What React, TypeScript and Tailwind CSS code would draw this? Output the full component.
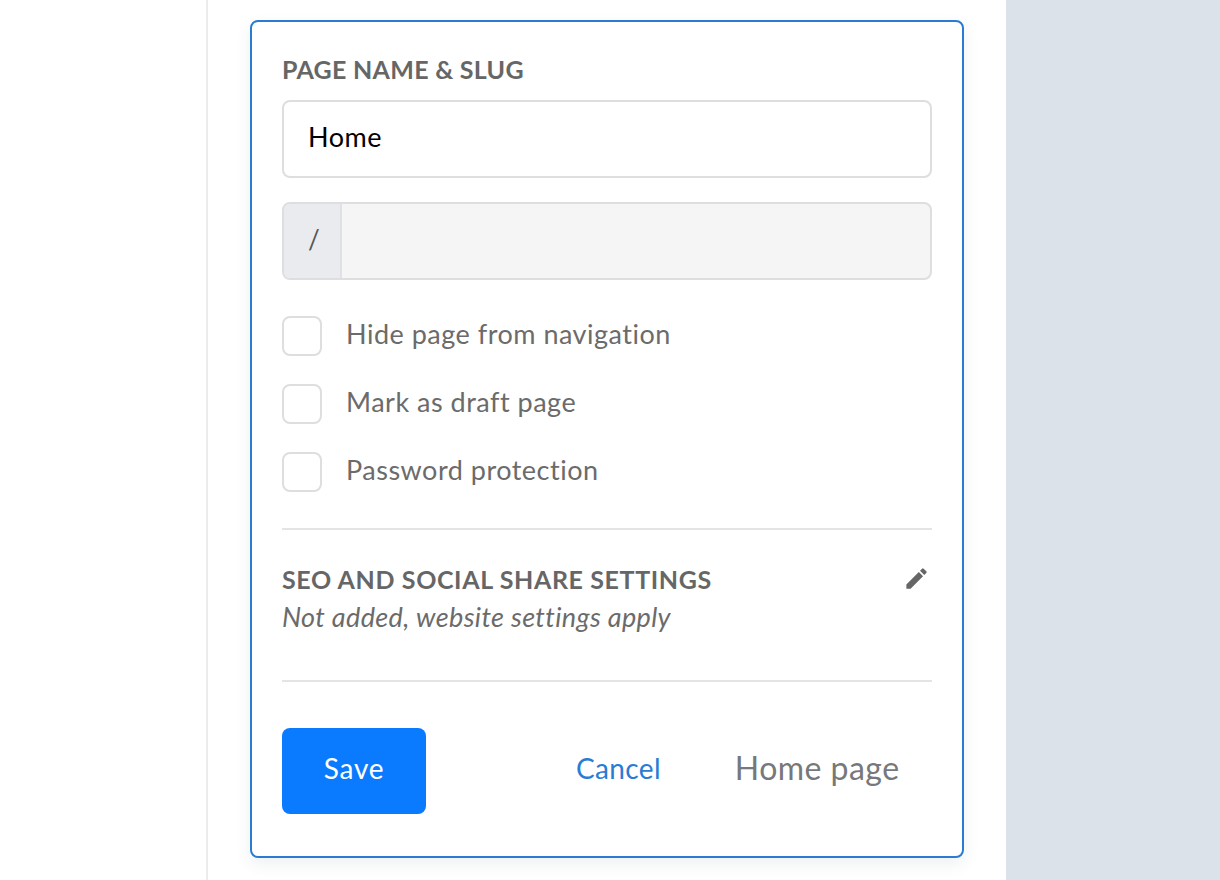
import { MdEdit } from 'react-icons/md';

const options = ['Hide page from navigation', 'Mark as draft page', 'Password protection'];

export default function App() {
  return (
    <div className="flex h-screen overflow-hidden bg-white font-['Lato','Liberation_Sans',sans-serif]">
      <div className="w-[206px] shrink-0" />

      <div className="w-[800px] shrink-0 border-l-2 border-[#ececec] bg-white pt-5 pl-[42px]">
        <div className="flex h-[838px] w-[714px] flex-col rounded-lg border-2 border-[#2a7cd3] bg-white px-[30px] pt-[34px] shadow-[0_6px_16px_rgba(40,60,90,0.08)]">
          <h2 className="text-[25px] leading-[26px] font-bold tracking-[0.28px] text-[#666666]">PAGE NAME &amp; SLUG</h2>

          <div className="mt-[18px] flex h-[78px] items-center rounded-lg border-2 border-[#dddedf] bg-white pb-1 pl-6 text-[27px] tracking-[0.5px] text-black">
            Home
          </div>

          <div className="mt-6 flex h-[78px] overflow-hidden rounded-lg border-2 border-[#dddedf] bg-[#f5f5f6]">
            <div className="flex w-[58px] items-center border-r-2 border-[#dfe1e4] bg-[#e9ebee] pb-1 pl-6 text-[26px] text-[#555555]">/</div>
          </div>

          <div className="mt-9 flex flex-col gap-7">
            {options.map(label => (
              <label key={label} className="flex h-10 items-center gap-6 text-[27px] tracking-[0.5px] text-[#6b6b6b]">
                <span className="h-10 w-10 shrink-0 rounded-lg border-2 border-[#dddedf] bg-white" />
                <span className="pb-[3px]">{label}</span>
              </label>
            ))}
          </div>

          <div className="mt-9 border-t-2 border-[#e4e4e4]" />

          <div className="mt-[35px] flex items-center justify-between">
            <h2 className="text-[25px] leading-[26px] font-bold tracking-[0.62px] text-[#666666]">SEO AND SOCIAL SHARE SETTINGS</h2>
            <MdEdit size={27} className="mr-[2px] text-[#666666]" />
          </div>
          <p className="mt-[12px] text-[27px] leading-[26px] tracking-[0.36px] text-[#6b6b6b] italic">Not added, website settings apply</p>

          <div className="mt-[50px] border-t-2 border-[#e4e4e4]" />

          <div className="mt-[46px] flex items-center">
            <button className="h-[86px] w-[144px] rounded-lg bg-[#0a7aff] pb-[7px] text-[28px] tracking-[0.7px] text-white">Save</button>
            <a className="mb-[7px] ml-[150px] text-[28px] tracking-[0.35px] text-[#2a7cd3]">Cancel</a>
            <span className="mb-[7px] ml-[74px] text-[32px] tracking-[0.45px] text-[#77787b]">Home page</span>
          </div>
        </div>
      </div>

      <div className="flex-1 bg-[#dbe2ea]" />
    </div>
  );
}
